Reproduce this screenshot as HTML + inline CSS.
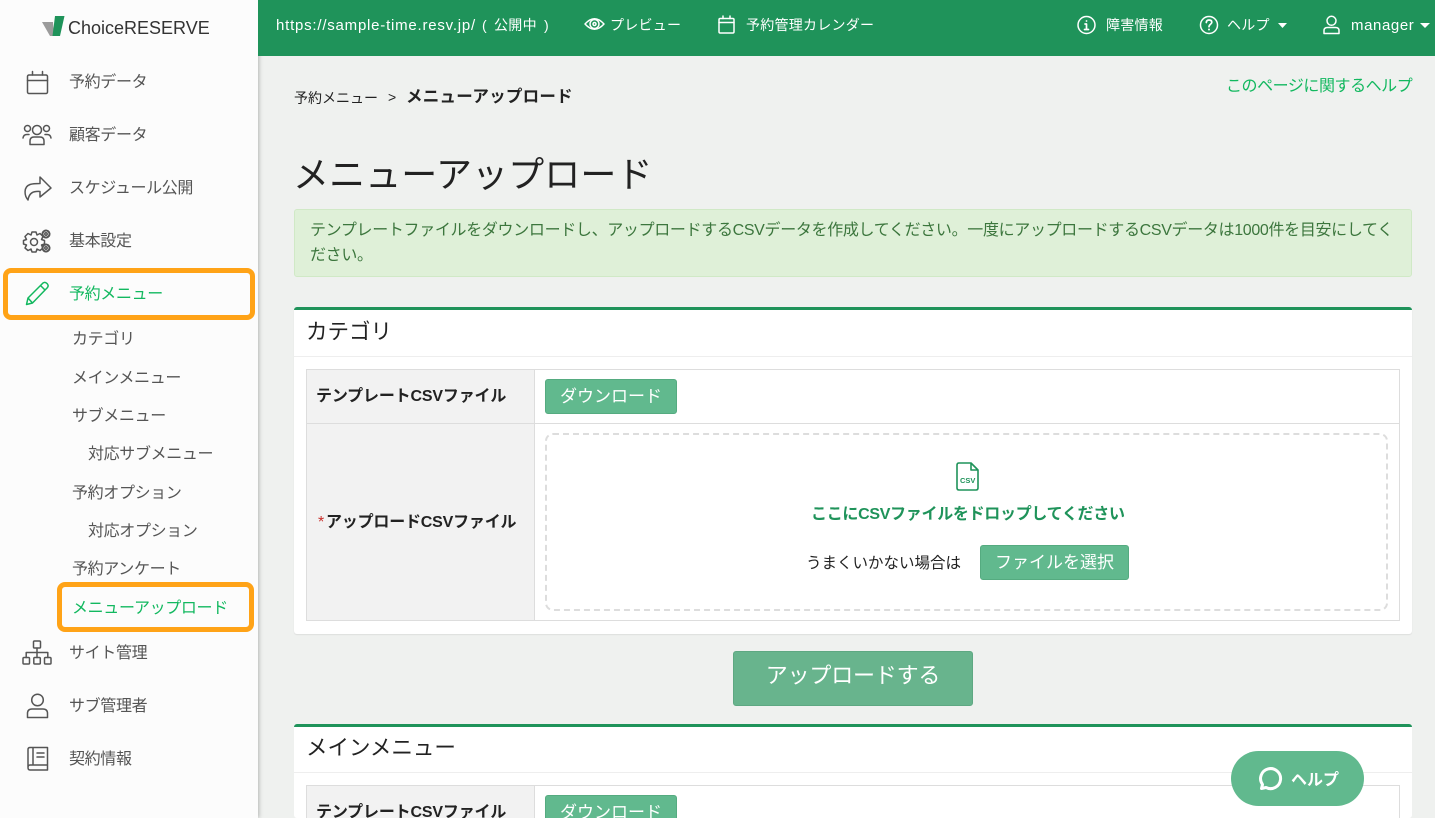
<!DOCTYPE html>
<html lang="ja"><head><meta charset="utf-8"><title>メニューアップロード</title>
<style>
*{box-sizing:border-box}
html,body{margin:0;padding:0;width:1435px;height:818px;overflow:hidden;background:#eff1ef}
#w{position:relative;width:1435px;height:818px;overflow:hidden;background:#eff1ef;font-family:"Liberation Sans","Noto Sans CJK JP",sans-serif;color:#222}
.a{position:absolute;white-space:nowrap}
.t{position:absolute;white-space:nowrap;line-height:20px;font-weight:400}
.side{color:#555;font-size:16px;left:69px;letter-spacing:-.35px}
.sub{color:#555;font-size:16px;left:72px;letter-spacing:-.35px}
.top{color:#fff;font-size:14px;font-weight:400;letter-spacing:.25px}
svg{position:absolute;overflow:visible;fill:none}
.ic{stroke:#555;stroke-width:1.5;stroke-linecap:round;stroke-linejoin:round}
.tw{stroke:#fff;stroke-width:1.5;stroke-linecap:round;stroke-linejoin:round}
.btn{position:absolute;background:#61b98e;border:1px solid #55ab80;border-radius:3px;color:#fff;text-align:center;font-weight:400}
.b{position:absolute;background:#ddd}
.th{position:absolute;background:#f2f2f2}
</style></head><body><div id="w">
<div class="a" style="left:0;top:0;width:258px;height:818px;background:#fcfcfc;box-shadow:1px 0 4px rgba(0,0,0,.25)"></div>
<div class="a" style="left:258px;top:0;width:1177px;height:56px;background:#1f935a"></div>

<!-- logo -->
<svg style="left:42px;top:16px" width="24" height="21"><path d="M0 6H11L12 20H8Z" fill="#9b9b9b"/><path d="M13 0H22.500L18 20H10.500Z" fill="#1f935a"/></svg>
<div class="t" style="left:68px;top:18px;font-size:18px;color:#333;font-weight:400;letter-spacing:0">ChoiceRESERVE</div>

<!-- sidebar icons -->
<svg class="ic" style="left:26px;top:70px" width="24" height="26"><rect x="1.500" y="5" width="20" height="18.500" rx="1.500"/><path d="M1.500 10.500H21.500M6.500 1.500V5M16.500 1.500V5"/></svg>
<svg class="ic" style="left:22px;top:123px" width="30" height="24"><circle cx="15" cy="7" r="4.500"/><circle cx="5.500" cy="5.500" r="3"/><circle cx="24.500" cy="5.500" r="3"/><path d="M8 21.500V18Q8 14 12 14H18Q22 14 22 18V21.500ZM1 15Q1.500 11.500 5 11.500H7M29 15Q28.500 11.500 25 11.500H23"/></svg>
<svg class="ic" style="left:23px;top:175px" width="29" height="26"><path d="M17 2L28 13L17 22V16.500C10 16 6 18 5 25C1.500 21 0 12 7 9.500C10 8.500 13 8.500 17 8.500Z"/></svg>
<svg class="ic" style="left:22px;top:228px" width="32" height="26"><circle cx="12" cy="14" r="3.500"/><path d="M10 4H14L15 7L18 5.500L21 8.500L19.500 11.500L22.500 12.500V16L19.500 17L21 20L18 22.500L15 21L14 24H10L9 21L6 22.500L3 20L4.500 17L1.500 16V12.500L4.500 11.500L3 8.500L6 5.500L9 7Z"/><circle cx="24" cy="6" r="3.500" stroke-width="2" stroke-dasharray="2 1"/><circle cx="24" cy="6" r="1.200"/><circle cx="24" cy="20" r="3.500" stroke-width="2" stroke-dasharray="2 1"/><circle cx="24" cy="20" r="1.200"/></svg>
<svg class="ic" style="left:25px;top:281px;stroke:#12b85f" width="24" height="25"><path d="M1.500 23.500L3 17L18 2Q20 .5 22 2.500Q24 4.500 22.500 6.500L7.500 22ZM3 17L7.500 22M15.500 4.500L20 9"/></svg>
<svg class="ic" style="left:22px;top:640px" width="30" height="26"><rect x="11.500" y="1" width="7" height="7" rx="1"/><rect x="1" y="17.500" width="6.500" height="6.500" rx="1"/><rect x="11.800" y="17.500" width="6.500" height="6.500" rx="1"/><rect x="22.500" y="17.500" width="6.500" height="6.500" rx="1"/><path d="M15 8V17.500M4.200 17.500V12.500H25.800V17.500"/></svg>
<svg class="ic" style="left:26px;top:693px" width="24" height="26"><circle cx="11.500" cy="7" r="5.800"/><path d="M1.500 24.500V20.500Q1.500 16 6 16H17Q21.500 16 21.500 20.500V24.500Z"/></svg>
<svg class="ic" style="left:26px;top:746px" width="24" height="26"><path d="M2 21V3.500Q2 1.500 4 1.500H21.500V19H4Q2 19 2 21.500Q2 24 4 24H21.500V19M7 1.500V19M11 7H18M11 11H18"/></svg>

<div class="t side" style="top:73px">予約データ</div>
<div class="t side" style="top:126px">顧客データ</div>
<div class="t side" style="top:179px">スケジュール公開</div>
<div class="t side" style="top:232px">基本設定</div>
<div class="t side" style="top:285px;color:#12b85f">予約メニュー</div>
<div class="t sub" style="top:330px">カテゴリ</div>
<div class="t sub" style="top:369px">メインメニュー</div>
<div class="t sub" style="top:407px">サブメニュー</div>
<div class="t sub" style="top:445px;left:88px">対応サブメニュー</div>
<div class="t sub" style="top:484px">予約オプション</div>
<div class="t sub" style="top:522px;left:88px">対応オプション</div>
<div class="t sub" style="top:560px">予約アンケート</div>
<div class="t sub" style="top:599px;color:#12b85f">メニューアップロード</div>
<div class="t side" style="top:644px">サイト管理</div>
<div class="t side" style="top:697px">サブ管理者</div>
<div class="t side" style="top:750px">契約情報</div>

<div class="a" style="left:3px;top:268px;width:252px;height:52px;border:5px solid #ffa317;border-radius:8px"></div>
<div class="a" style="left:57px;top:582px;width:197px;height:50px;border:5px solid #ffa317;border-radius:8px"></div>

<!-- top bar -->
<div class="t top" style="left:276px;top:16px;font-size:15px;letter-spacing:.78px">https://sample-time.resv.jp/</div>
<div class="t top" style="left:482px;top:15px;font-size:14px;letter-spacing:0">(</div>
<div class="t top" style="left:494px;top:15px;letter-spacing:.3px">公開中</div>
<div class="t top" style="left:544px;top:15px;letter-spacing:0">)</div>
<svg class="tw" style="left:584px;top:15px" width="22" height="18"><path d="M1 9Q10.500-1.500 20 9Q10.500 19.500 1 9Z"/><circle cx="10.500" cy="9" r="4.500"/><circle cx="10.500" cy="9" r="1.500"/></svg>
<div class="t top" style="left:610px;top:15px">プレビュー</div>
<svg class="tw" style="left:718px;top:15px" width="18" height="20"><rect x="1" y="3.500" width="15" height="14.500" rx="1.200"/><path d="M1 7.500H16M5 1V3.500M12 1V3.500"/></svg>
<div class="t top" style="left:746px;top:15px">予約管理カレンダー</div>
<svg class="tw" style="left:1077px;top:15px" width="20" height="20"><circle cx="9.500" cy="10" r="8.500"/><path d="M9.500 9V14.500M7.500 14.500H11.500M8 9H9.500" stroke-width="1.700"/><circle cx="9.500" cy="6" r=".9" fill="#fff" stroke="none"/></svg>
<div class="t top" style="left:1106px;top:15px">障害情報</div>
<svg class="tw" style="left:1200px;top:15px" width="20" height="20"><circle cx="9" cy="10" r="8.500"/><path d="M6.300 7.500Q6.500 5 9 5Q11.800 5 11.800 7.300C11.800 9.300 9 9.300 9 11.800" stroke-width="1.700"/><circle cx="9" cy="14.500" r="1" fill="#fff" stroke="none"/></svg>
<div class="t top" style="left:1227px;top:15px">ヘルプ</div>
<svg style="left:1278px;top:23px" width="10" height="6"><path d="M0 0H9L4.500 5Z" fill="#fff"/></svg>
<svg class="tw" style="left:1323px;top:15px" width="18" height="20"><circle cx="8.500" cy="5.800" r="4.500"/><path d="M1 18.500V15.500Q1 12.500 4.500 12.500H12.500Q16 12.500 16 15.500V18.500Z"/></svg>
<div class="t top" style="left:1351px;top:16px;font-size:15px;letter-spacing:.6px">manager</div>
<svg style="left:1420px;top:23px" width="10" height="6"><path d="M0 0H10L5 5Z" fill="#fff"/></svg>

<!-- header area -->
<div class="t" style="left:1226px;top:77px;font-size:16px;color:#12b85f;letter-spacing:-.45px">このページに関するヘルプ</div>
<div class="t" style="left:294px;top:88px;font-size:14px">予約メニュー</div>
<div class="t" style="left:388px;top:87px;font-size:14px">&gt;</div>
<div class="t" style="left:406px;top:87px;font-size:16.500px;font-weight:700;letter-spacing:.25px">メニューアップロード</div>
<div class="t" style="left:293px;top:150px;font-size:36px;line-height:50px;font-weight:400;letter-spacing:.1px">メニューアップロード</div>

<div class="a" style="left:294px;top:209px;width:1118px;height:68px;background:#dff0d8;border:1px solid #d0e9c6;border-radius:3px"></div>
<div class="a" style="left:310px;top:218px;width:1090px;white-space:normal;font-size:16px;line-height:25px;color:#3c763d;font-weight:400;letter-spacing:-.33px">テンプレートファイルをダウンロードし、アップロードするCSVデータを作成してください。一度にアップロードするCSVデータは1000件を目安にしてください。</div>

<!-- panel 1 -->
<div class="a" style="left:294px;top:307px;width:1118px;height:327px;background:#fff;border-top:3px solid #1f935a;border-radius:3px;box-shadow:0 1px 1px rgba(0,0,0,.08)"></div>
<div class="t" style="left:306px;top:319px;font-size:21.500px;line-height:26px">カテゴリ</div>
<div class="b" style="left:294px;top:356px;width:1118px;height:1px;background:#eee"></div>
<div class="th" style="left:307px;top:370px;width:227px;height:250px"></div>
<div class="b" style="left:306px;top:369px;width:1094px;height:1px"></div>
<div class="b" style="left:306px;top:423px;width:1094px;height:1px"></div>
<div class="b" style="left:306px;top:620px;width:1094px;height:1px"></div>
<div class="b" style="left:306px;top:369px;width:1px;height:252px"></div>
<div class="b" style="left:534px;top:369px;width:1px;height:252px"></div>
<div class="b" style="left:1399px;top:369px;width:1px;height:252px"></div>
<div class="t" style="left:316px;top:387px;font-size:16px;font-weight:700;letter-spacing:-.17px">テンプレートCSVファイル</div>
<div class="btn" style="left:545px;top:379px;width:132px;height:35px;font-size:17px;line-height:33px">ダウンロード</div>
<div class="t" style="left:318px;top:513px;font-size:16px;font-weight:700"><span style="color:#c9302c;font-weight:400">*</span></div>
<div class="t" style="left:326px;top:513px;font-size:16px;font-weight:700;letter-spacing:-.2px">アップロードCSVファイル</div>
<div class="a" style="left:545px;top:433px;width:843px;height:178px;border:2px dashed #ddd;border-radius:8px"></div>
<svg style="left:956px;top:462px;stroke:#1f935a;stroke-width:1.600;stroke-linejoin:round" width="24" height="30"><path d="M1 3Q1 1 3 1H15L22 8V26Q22 28 20 28H3Q1 28 1 26ZM15 1V8H22"/></svg>
<div class="t" style="left:960px;top:475px;font-size:7.500px;font-weight:700;color:#1f935a;line-height:12px">CSV</div>
<div class="t" style="left:811px;top:505px;font-size:16px;font-weight:700;color:#1f935a;letter-spacing:-.3px">ここにCSVファイルをドロップしてください</div>
<div class="t" style="left:806px;top:554px;font-size:15.500px;font-weight:400">うまくいかない場合は</div>
<div class="btn" style="left:980px;top:545px;width:149px;height:35px;font-size:17px;line-height:33px">ファイルを選択</div>

<div class="btn" style="left:733px;top:651px;width:240px;height:55px;font-size:22px;line-height:47px;background:#68b48d;border-color:#5ea882;letter-spacing:-.2px">アップロードする</div>

<!-- panel 2 -->
<div class="a" style="left:294px;top:724px;width:1118px;height:94px;background:#fff;border-top:3px solid #1f935a;border-radius:3px"></div>
<div class="t" style="left:306px;top:735px;font-size:21.500px;line-height:26px">メインメニュー</div>
<div class="b" style="left:294px;top:772px;width:1118px;height:1px;background:#eee"></div>
<div class="th" style="left:307px;top:786px;width:227px;height:32px"></div>
<div class="b" style="left:306px;top:785px;width:1094px;height:1px"></div>
<div class="b" style="left:306px;top:785px;width:1px;height:33px"></div>
<div class="b" style="left:534px;top:785px;width:1px;height:33px"></div>
<div class="b" style="left:1399px;top:785px;width:1px;height:33px"></div>
<div class="t" style="left:316px;top:803px;font-size:16px;font-weight:700;letter-spacing:-.17px">テンプレートCSVファイル</div>
<div class="btn" style="left:545px;top:795px;width:132px;height:35px;font-size:17px;line-height:33px">ダウンロード</div>

<!-- help button -->
<div class="a" style="left:1231px;top:751px;width:133px;height:55px;background:#61b98e;border-radius:28px"></div>
<svg style="left:1258px;top:767px;stroke:#fff;stroke-width:3;stroke-linejoin:round" width="24" height="25"><path d="M3.500 21.500L4.500 17.500A10 10 0 1 1 8 20.500Z"/></svg>
<div class="t" style="left:1291px;top:771px;font-size:16px;font-weight:700;color:#fff">ヘルプ</div>
</div></body></html>
